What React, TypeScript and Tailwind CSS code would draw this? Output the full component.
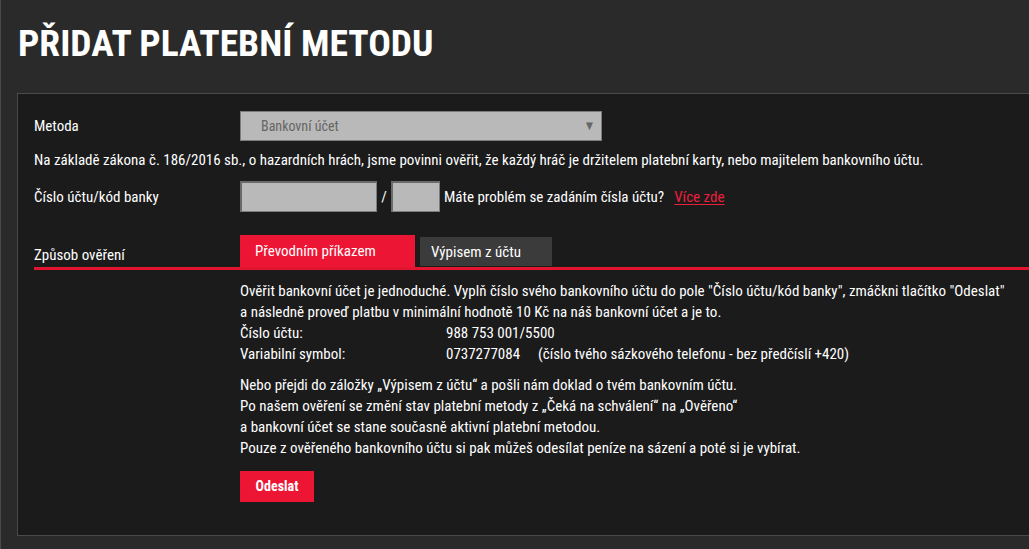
import React from "react";

const font = {
  fontFamily: "'Roboto Condensed', 'Liberation Sans Narrow', 'DejaVu Sans Condensed', Roboto, sans-serif",
};

export default function App() {
  return (
    <div
      className="w-[1029px] h-[549px] overflow-hidden bg-[#2a2a2a] text-white font-stretch-condensed border-l border-[#4a4a4a] pl-4"
      style={font}
    >
      <h1 className="pt-[22px] h-[93px] text-[37.6px] leading-[42px] font-bold tracking-[0px] pl-px">
        PŘIDAT PLATEBNÍ METODU
      </h1>
      <div className="h-[443px] bg-[#1b1b1b] border-t border-l border-b border-[#4a4a4a] pl-4 pt-4 text-[15px] leading-[20px]">
        {/* Metoda */}
        <div className="flex items-center h-[30px] mt-px">
          <div className="w-[206px]">Metoda</div>
          <div className="w-[362px] h-[30px] bg-[#b9b9b9] border border-[#7c7c7c] flex items-center justify-between pl-5 pr-2 text-[#666] text-[14px]">
            <span>Bankovní účet</span>
            <span className="text-[10px] text-[#666]">▼</span>
          </div>
        </div>
        <div className="mt-[9px] h-[20px]">
          Na základě zákona č. 186/2016 sb., o hazardních hrách, jsme povinni ověřit, že každý hráč je držitelem platební karty, nebo majitelem bankovního účtu.
        </div>
        <div className="flex items-center mt-[11px] h-[31px]">
          <div className="w-[206px]">Číslo účtu/kód banky</div>
          <div className="w-[137px] h-[31px] bg-[#b9b9b9] border border-[#7c7c7c] border-t-2 border-l-2 border-t-[#6a6a6a] border-l-[#6a6a6a]" />
          <span className="w-[14px] text-center">/</span>
          <div className="w-[49px] h-[31px] bg-[#b9b9b9] border border-[#7c7c7c] border-t-2 border-l-2 border-t-[#6a6a6a] border-l-[#6a6a6a]" />
          <span className="ml-[4px]">Máte problém se zadáním čísla účtu?</span>
          <a className="ml-[10px] text-[#ee1f3b] underline underline-offset-2">Více zde</a>
        </div>
        {/* tabs */}
        <div className="mt-[23px] flex items-end border-b-[3px] border-[#e1152f]">
          <div className="w-[206px] pb-[2px]">Způsob ověření</div>
          <div className="w-[175px] h-[32px] bg-[#ed1534] flex items-center pl-[15px]">Převodním příkazem</div>
          <div className="ml-[5px] w-[132px] h-[29px] mb-[1px] bg-[#3b3b3b] flex items-center pl-[11px]">Výpisem z účtu</div>
        </div>
        <div className="pl-[206px] pt-[11px] leading-[21px]">
          <p>Ověřit bankovní účet je jednoduché. Vyplň číslo svého bankovního účtu do pole "Číslo účtu/kód banky", zmáčkni tlačítko "Odeslat"</p>
          <p>a následně proveď platbu v minimální hodnotě 10 Kč na náš bankovní účet a je to.</p>
          <div className="flex">
            <span className="w-[206px]">Číslo účtu:</span>
            <span>988 753 001/5500</span>
          </div>
          <div className="flex">
            <span className="w-[206px]">Variabilní symbol:</span>
            <span className="w-[92px]">0737277084</span>
            <span>(číslo tvého sázkového telefonu - bez předčíslí +420)</span>
          </div>
          <p className="mt-[10px]">Nebo přejdi do záložky „Výpisem z účtu“ a pošli nám doklad o tvém bankovním účtu.</p>
          <p>Po našem ověření se změní stav platební metody z „Čeká na schválení“ na „Ověřeno“</p>
          <p>a bankovní účet se stane současně aktivní platební metodou.</p>
          <p>Pouze z ověřeného bankovního účtu si pak můžeš odesílat peníze na sázení a poté si je vybírat.</p>
          <button className="mt-[12px] w-[74px] h-[31px] bg-[#ed1534] font-bold text-[14px]">Odeslat</button>
        </div>
      </div>
    </div>
  );
}
